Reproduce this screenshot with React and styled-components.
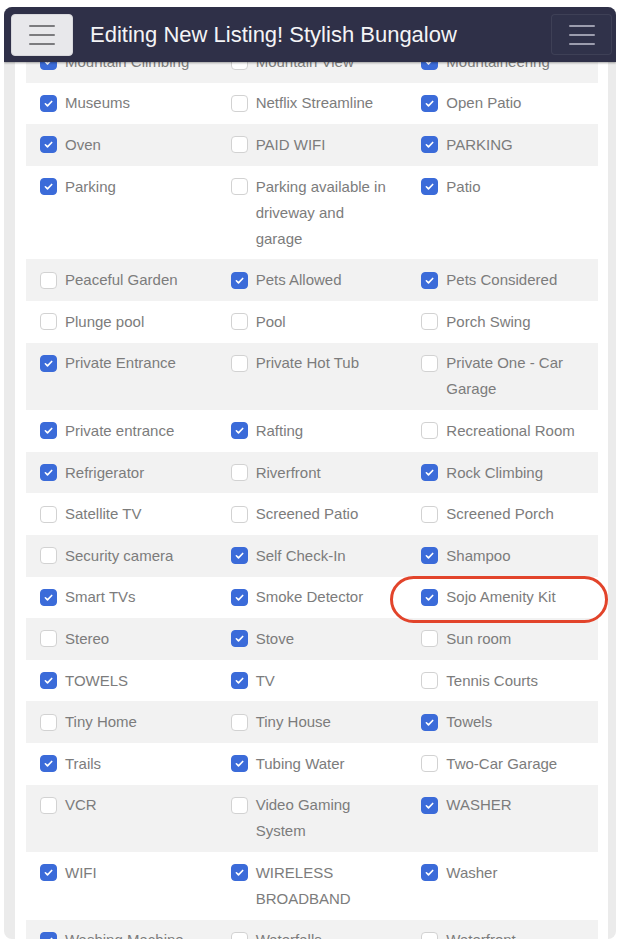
import React from "react";
import styled, { createGlobalStyle } from "styled-components";

const GlobalStyle = createGlobalStyle`
  html, body {
    margin: 0;
    padding: 0;
    background: #ffffff;
  }
  body {
    font-family: "Liberation Sans", Arial, Helvetica, sans-serif;
  }
`;

const rows = [
  [["Mountain Climbing", true], ["Mountain View", false], ["Mountaineering", true]],
  [["Museums", true], ["Netflix Streamline", false], ["Open Patio", true]],
  [["Oven", true], ["PAID WIFI", false], ["PARKING", true]],
  [["Parking", true], ["Parking available in driveway and garage", false], ["Patio", true]],
  [["Peaceful Garden", false], ["Pets Allowed", true], ["Pets Considered", true]],
  [["Plunge pool", false], ["Pool", false], ["Porch Swing", false]],
  [["Private Entrance", true], ["Private Hot Tub", false], ["Private One - Car Garage", false]],
  [["Private entrance", true], ["Rafting", true], ["Recreational Room", false]],
  [["Refrigerator", true], ["Riverfront", false], ["Rock Climbing", true]],
  [["Satellite TV", false], ["Screened Patio", false], ["Screened Porch", false]],
  [["Security camera", false], ["Self Check-In", true], ["Shampoo", true]],
  [["Smart TVs", true], ["Smoke Detector", true], ["Sojo Amenity Kit", true, true]],
  [["Stereo", false], ["Stove", true], ["Sun room", false]],
  [["TOWELS", true], ["TV", true], ["Tennis Courts", false]],
  [["Tiny Home", false], ["Tiny House", false], ["Towels", true]],
  [["Trails", true], ["Tubing Water", true], ["Two-Car Garage", false]],
  [["VCR", false], ["Video Gaming System", false], ["WASHER", true]],
  [["WIFI", true], ["WIRELESS BROADBAND", true], ["Washer", true]],
  [["Washing Machine", true], ["Waterfalls", false], ["Waterfront", false]],
];

export default function App() {
  return (
    <>
      <GlobalStyle />
      <Screen>
        <NavBar>
          <Toggler>
            <Bars light={false} />
          </Toggler>
          <Title>Editing New Listing! Stylish Bungalow</Title>
          <Toggler dark>
            <Bars light />
          </Toggler>
        </NavBar>
        <Panel>
          {rows.map((row, i) => (
            <Row key={i} striped={i % 2 === 0}>
              {row.map(([label, checked, circled]) => (
                <Cell key={label}>
                  <Box checked={checked}>
                    {checked && (
                      <svg width="11" height="11" viewBox="0 0 12 12">
                        <path
                          d="M2.6 6.3l2.3 2.3 4.6-4.8"
                          fill="none"
                          stroke="#fff"
                          strokeWidth="1.8"
                          strokeLinecap="round"
                          strokeLinejoin="round"
                        />
                      </svg>
                    )}
                  </Box>
                  <Label>{label}</Label>
                  {circled && <Circle />}
                </Cell>
              ))}
            </Row>
          ))}
        </Panel>
      </Screen>
    </>
  );
}

function Bars({ light }) {
  return (
    <BarStack>
      <Bar light={light} />
      <Bar light={light} />
      <Bar light={light} />
    </BarStack>
  );
}

const Screen = styled.div`
  margin: 7px 8px 0 4px;
  height: 932px;
  border-radius: 8px;
  overflow: hidden;
  background: #ebebeb;
  display: flex;
  flex-direction: column;
`;

const NavBar = styled.nav`
  position: relative;
  z-index: 2;
  flex: 0 0 55px;
  display: flex;
  align-items: center;
  padding: 0 4px 0 7px;
  background: #2f3048;
  box-shadow: 0 1px 2px rgba(0, 0, 0, 0.35);
`;

const Toggler = styled.button`
  width: ${(p) => (p.dark ? "61px" : "62px")};
  height: ${(p) => (p.dark ? "41px" : "42px")};
  border-radius: 4px;
  border: 1px solid ${(p) => (p.dark ? "rgba(255,255,255,0.07)" : "#d8d8dc")};
  background: ${(p) => (p.dark ? "#30324a" : "#e8e8eb")};
  display: flex;
  align-items: center;
  justify-content: center;
  padding: 0;
  margin-left: ${(p) => (p.dark ? "auto" : "0")};
`;

const BarStack = styled.span`
  display: flex;
  flex-direction: column;
  gap: 7px;
`;

const Bar = styled.span`
  display: block;
  width: 26px;
  height: 2px;
  border-radius: 1px;
  background: ${(p) => (p.light ? "#9c9dae" : "#7b7b7e")};
`;

const Title = styled.h1`
  margin: 0 0 0 17px;
  font-size: 22px;
  font-weight: normal;
  color: #f4f4f6;
  white-space: nowrap;
`;

const Panel = styled.div`
  flex: 1;
  margin: -21px 8px 0 11px;
  padding: 0 10px 0 11px;
  background: #ffffff;
`;

const Row = styled.div`
  display: grid;
  grid-template-columns: repeat(3, 1fr);
  background: ${(p) => (p.striped ? "#f2f2f2" : "#ffffff")};
`;

const Cell = styled.div`
  position: relative;
  display: flex;
  align-items: flex-start;
  gap: 8px;
  padding: 7.8px 16px 7.8px 14px;
`;

const Box = styled.span`
  flex: 0 0 auto;
  box-sizing: border-box;
  width: 17px;
  height: 17px;
  margin-top: 4.5px;
  border-radius: 4px;
  display: flex;
  align-items: center;
  justify-content: center;
  background: ${(p) => (p.checked ? "#3b6bd9" : "#ffffff")};
  border: 1px solid ${(p) => (p.checked ? "#3b6bd9" : "#d2d2d2")};
`;

const Label = styled.span`
  font-size: 15px;
  line-height: 26px;
  color: #7c7c7c;
`;

const Circle = styled.span`
  position: absolute;
  left: -17px;
  top: -1px;
  width: 218px;
  height: 47px;
  box-sizing: border-box;
  border: 3px solid #e2442b;
  border-radius: 24px;
  pointer-events: none;
`;
